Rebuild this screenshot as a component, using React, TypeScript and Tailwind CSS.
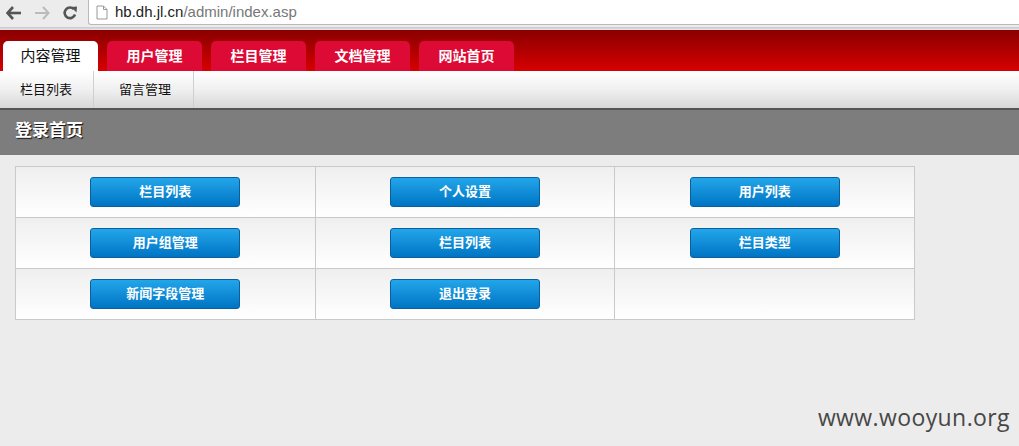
const FONT = "font-['Liberation_Sans','Noto_Sans_CJK_SC',sans-serif]";

const TABS = ["内容管理", "用户管理", "栏目管理", "文档管理", "网站首页"];
const CELLS: (string | null)[] = [
  "栏目列表",
  "个人设置",
  "用户列表",
  "用户组管理",
  "栏目列表",
  "栏目类型",
  "新闻字段管理",
  "退出登录",
  null,
];

function BrowserBar() {
  return (
    <div className="flex h-[27px] items-start bg-[#ececec]">
      <div className="flex h-[25px] w-[88px] items-center gap-[12px] pl-[6px]">
        {/* back */}
        <svg width="16" height="14" viewBox="0 0 16 14">
          <path d="M7 1 L1.5 7 L7 13" fill="none" stroke="#555" strokeWidth="2.6" />
          <path d="M2 7 H15" stroke="#555" strokeWidth="2.6" />
        </svg>
        {/* forward */}
        <svg width="16" height="14" viewBox="0 0 16 14">
          <path d="M9 1 L14.5 7 L9 13" fill="none" stroke="#bbb" strokeWidth="2" />
          <path d="M1 7 H14" stroke="#bbb" strokeWidth="2" />
        </svg>
        {/* reload */}
        <svg width="16" height="16" viewBox="0 0 16 16">
          <path d="M13 9.5 A5.3 5.3 0 1 1 11.8 4.2" fill="none" stroke="#555" strokeWidth="2.6" />
          <path d="M9 2 L15 1.5 L14.5 7.5 Z" fill="#555" />
        </svg>
      </div>
      <div className="flex h-[25px] flex-1 items-center rounded-bl-[3px] border-b border-l border-[#b9b9b9] bg-white pl-[7px]">
        <svg width="12" height="15" viewBox="0 0 12 15" className="mr-[7px]">
          <path d="M1 1 H7.5 L11 4.5 V14 H1 Z" fill="white" stroke="#999" strokeWidth="1" />
          <path d="M7.5 1 V4.5 H11" fill="none" stroke="#999" strokeWidth="1" />
        </svg>
        <span className="text-[15px] text-[#222] font-['Liberation_Sans',sans-serif]">
          hb.dh.jl.cn<span className="text-[#777]">/admin/index.asp</span>
        </span>
      </div>
    </div>
  );
}

export default function App() {
  return (
    <div className={`${FONT} h-[446px] w-[1019px] overflow-hidden bg-[#ececec]`}>
      <BrowserBar />
      <div className="h-[3px] bg-gradient-to-b from-[#c4c7ca] to-[#e6e6e6]" />

      {/* red header with tabs */}
      <div className="flex h-[41px] items-end gap-[9px] bg-gradient-to-b from-[#8a0000] via-[#b00000] to-[#d80000] pl-[3px]">
        {TABS.map((t, i) => (
          <div
            key={t}
            className={`flex h-[30px] w-[95px] items-center justify-center rounded-t-[5px] ${
              i === 0
                ? "bg-white text-[15px] text-[#111]"
                : "bg-[#dc0a35] text-[14px] font-bold text-white"
            }`}
          >
            {t}
          </div>
        ))}
      </div>

      {/* sub nav */}
      <div className="flex h-[37px] bg-gradient-to-b from-white via-[#f0f0f0] to-[#d8d8d8] text-[13px] text-[#111]">
        <div className="flex w-[94px] items-center border-r border-[#cfcfcf] pl-[20px]">栏目列表</div>
        <div className="flex w-[100px] items-center border-r border-[#cfcfcf] pl-[25px]">留言管理</div>
      </div>
      <div className="h-[2px] bg-[#555]" />

      {/* section title */}
      <div className="flex h-[45px] items-center bg-[#7d7d7d] pl-[15px] pb-[4px]">
        <span className="text-[17px] font-bold text-white [text-shadow:1px_1px_1px_#111]">登录首页</span>
      </div>

      {/* grid of buttons */}
      <div className="pl-[15px] pt-[11px]">
        <div className="grid w-[900px] grid-cols-3 border-t border-l border-[#c9c9c9]">
          {CELLS.map((c, i) => (
            <div
              key={i}
              className="flex h-[51px] items-center justify-center border-r border-b border-[#c9c9c9] bg-gradient-to-b from-[#efefef] to-white"
            >
              {c && (
                <button
                  type="button"
                  className="h-[30px] w-[150px] rounded-[3px] border border-[#0b5f9e] bg-gradient-to-b from-[#22a6ea] to-[#0074c4] text-[13px] font-bold text-white"
                >
                  {c}
                </button>
              )}
            </div>
          ))}
        </div>
      </div>

      <div className="mt-[80px] flex justify-end pr-[9px]">
        <span className="text-[23px] tracking-[0.4px] text-[#474747] font-['Open_Sans',sans-serif]">www.wooyun.org</span>
      </div>
    </div>
  );
}
